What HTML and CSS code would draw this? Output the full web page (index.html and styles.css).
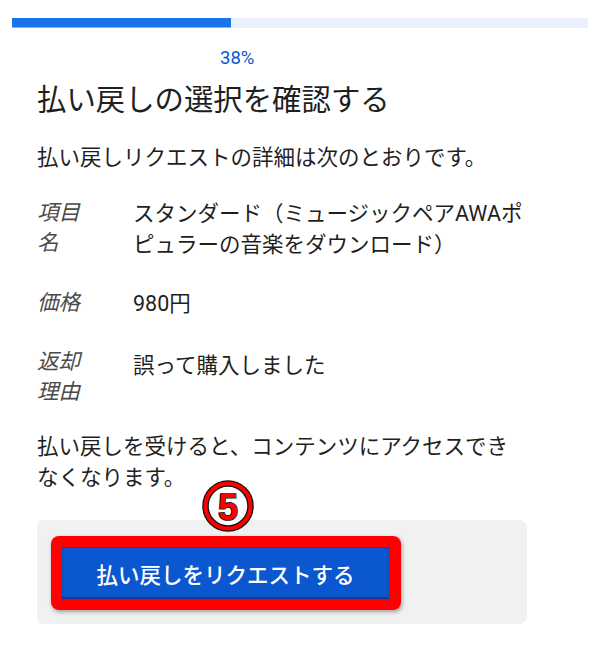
FILE: index.html
```html
<!DOCTYPE html>
<html lang="ja">
<head>
<meta charset="utf-8">
<title>払い戻しの選択を確認する</title>
<link rel="stylesheet" href="styles.css">
</head>
<body>
<div class="progress"><div class="progress-fill" style="width:38%"></div></div>
<div class="pct">38%</div>
<main class="content">
  <h1 class="title">払い戻しの選択を確認する</h1>
  <p class="lead">払い戻しリクエストの詳細は次のとおりです。</p>
  <dl class="details">
    <dt>項目名</dt><dd>スタンダード（ミュージックペアAWAポピュラーの音楽をダウンロード）</dd>
    <dt>価格</dt><dd>980円</dd>
    <dt>返却理由</dt><dd>誤って購入しました</dd>
  </dl>
  <p class="note">払い戻しを受けると、コンテンツにアクセスできなくなります。</p>
  <div class="actions">
    <div class="highlight"><button class="btn" type="button">払い戻しをリクエストする</button></div>
    <svg class="step" width="52" height="52" viewBox="0 0 52 52" aria-label="5">
      <circle cx="26" cy="26" r="22.5" fill="#fff" stroke="#111" stroke-width="6.5"/>
      <circle cx="26" cy="26" r="22.5" fill="none" stroke="#f00" stroke-width="4"/>
      <text x="26" y="39.5" text-anchor="middle" class="step-num">5</text>
    </svg>
  </div>
</main>
</body>
</html>
```

FILE: styles.css
```css
* { box-sizing: border-box; }
html, body { margin: 0; padding: 0; background: #fff; }
body {
  font-family: Roboto, "Noto Sans CJK JP", sans-serif;
  color: #1f1f1f;
  width: 600px;
  height: 645px;
  overflow: hidden;
}
.progress {
  margin: 18px 12px 0;
  height: 10px;
  background: #e8f0fe;
}
.progress-fill {
  height: 100%;
  background: #1a73e8;
  border-bottom: 1px solid #8ab4f8;
}
.pct {
  margin: 19px 0 0 220px;
  font-size: 18.5px;
  line-height: 22px;
  color: #0b57d0;
}
.content {
  padding: 0 73px 0 37px;
}
.title {
  margin: 12px 0 0;
  font-size: 29.4px;
  font-weight: 400;
  line-height: 38px;
  color: #1f1f1f;
}
.lead {
  margin: 23px 0 0;
  font-size: 21.5px;
  line-height: 31px;
}
.details {
  margin: 25px 0 0;
  display: grid;
  grid-template-columns: 56px 1fr;
  column-gap: 40px;
  row-gap: 28px;
  font-size: 21.5px;
  line-height: 31px;
}
.details dt {
  font-style: italic;
  color: #4a4a4a;
  line-height: 30px;
}
.details dd {
  margin: 0;
}
.details dd:last-of-type { padding-top: 3px; }
.note {
  margin: 24px 0 0;
  font-size: 21.5px;
  line-height: 31px;
}
.actions {
  position: relative;
  margin-top: 27px;
  background: #f1f1f1;
  border-radius: 7px;
  padding: 16px 0 14px 14px;
}
.highlight {
  display: inline-block;
  background: #ff0000;
  border-radius: 8px;
  padding: 11px 12px 11px 11px;
  box-shadow: 1px 2px 4px rgba(0, 0, 0, 0.35);
}
.btn {
  display: block;
  width: 327px;
  height: 52px;
  border: 0;
  margin: 0;
  padding: 0;
  background: #0b57d0;
  box-shadow: inset 0 -2px 2px rgba(0, 0, 0, 0.3), inset 0 1px 1px rgba(0, 0, 0, 0.2);
  color: #fff;
  font-family: Roboto, "Noto Sans CJK JP", sans-serif;
  font-size: 21.5px;
  font-weight: 500;
  letter-spacing: 0;
}
.step {
  position: absolute;
  left: 165px;
  top: -40px;
}
.step-num {
  font-family: "Liberation Sans", Arial, sans-serif;
  font-weight: 700;
  font-size: 36px;
  fill: #f00;
  stroke: #111;
  stroke-width: 1.6px;
  paint-order: stroke;
}
```
